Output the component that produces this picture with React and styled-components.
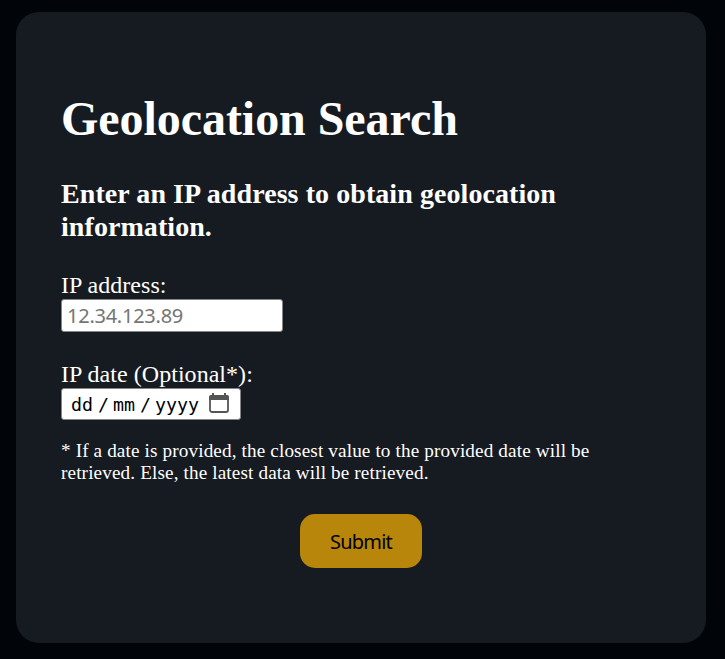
import React from "react";
import styled, { createGlobalStyle } from "styled-components";

const GlobalStyle = createGlobalStyle`
  * { box-sizing: border-box; }
  body { margin: 0; background: #010409; color: #fff; font-family: "Liberation Serif", "Times New Roman", serif; }
`;
const Page = styled.main`
  height: 659px;
  padding: 12px 19px 16px 16px;
  overflow: hidden;
`;
const Card = styled.section`
  height: 631px;
  border-radius: 23px;
  background: #161b22;
  padding: 79px 45px 0;
`;
const Title = styled.h1`
  margin: 0;
  font-size: 48px;
  line-height: 55px;
  letter-spacing: -0.05px;
`;
const Subtitle = styled.h2`
  margin: 31px 0 0;
  font-size: 28px;
  line-height: 33px;
  letter-spacing: 0.07px;
  width: 560px;
`;
const Field = styled.div`
  display: flex;
  flex-direction: column;
  align-items: flex-start;
  margin-top: ${(p) => p.$gap}px;
`;
const Label = styled.label`
  font-size: 24px;
  line-height: 28px;
  letter-spacing: 0.04px;
`;
const TextInput = styled.input`
  width: 222px;
  height: 33px;
  padding: 2px 5px;
  border: 1px solid #858585;
  border-radius: 3px;
  background: #fff;
  color: #000;
  font: 20px "Noto Sans", sans-serif;
  letter-spacing: -0.25px;
  &::placeholder { color: #757575; opacity: 1; }
`;
const DateBox = styled.div`
  display: flex;
  align-items: center;
  width: 180px;
  height: 32px;
  padding: 0 0 0 9px;
  border: 1px solid #858585;
  border-radius: 3px;
  background: #fff;
  color: #000;
  font: 18.3px "DejaVu Sans Mono", monospace;
`;
const Segment = styled.span`
  width: ${(p) => p.$w}px;
  white-space: nowrap;
`;
const Calendar = styled.svg`
  flex: none;
  margin-top: -2px;
`;
const Note = styled.p`
  margin: 20px 0 0;
  font-size: 19.2px;
  line-height: 22px;
  letter-spacing: 0.125px;
  width: 560px;
`;
const Submit = styled.button`
  display: block;
  width: 122px;
  height: 54px;
  margin: 30px auto 0;
  padding: 0;
  border: 0;
  border-radius: 15px;
  background: #b8860b;
  color: #000;
  font: 20px "Noto Sans", sans-serif;
  letter-spacing: -0.8px;
`;

export default function App() {
  return (
    <Page>
      <GlobalStyle />
      <Card>
        <Title>Geolocation Search</Title>
        <Subtitle>Enter an IP address to obtain geolocation<br />information.</Subtitle>
        <Field $gap={28}>
          <Label htmlFor="ip">IP address:</Label>
          <TextInput id="ip" placeholder="12.34.123.89" />
        </Field>
        <Field $gap={28}>
          <Label>IP date (Optional*):</Label>
          <DateBox>
            <Segment $w={27}>dd</Segment>
            <Segment $w={15}>/</Segment>
            <Segment $w={27}>mm</Segment>
            <Segment $w={15}>/</Segment>
            <Segment $w={54}>yyyy</Segment>
            <Calendar width="20" height="20" viewBox="0 0 20 20" fill="none">
              <rect x="1" y="3" width="18" height="16" rx="2" stroke="#555" strokeWidth="1.8" />
              <path d="M0 4q0-2 2-2h16q2 0 2 2v3H0zM3 0h2v3H3zM15 0h2v3h-2z" fill="#555" />
            </Calendar>
          </DateBox>
        </Field>
        <Note>
          * If a date is provided, the closest value to the provided date will be<br />
          retrieved. Else, the latest data will be retrieved.
        </Note>
        <Submit type="button">Submit</Submit>
      </Card>
    </Page>
  );
}
